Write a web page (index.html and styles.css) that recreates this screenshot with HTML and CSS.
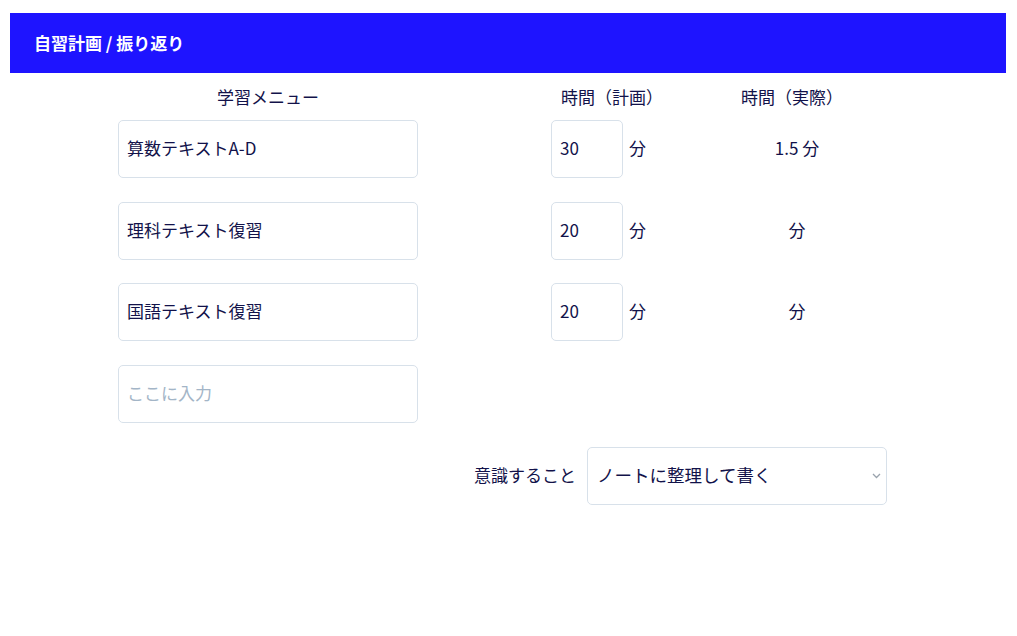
FILE: index.html
```html
<!DOCTYPE html>
<html lang="ja">
<head>
<meta charset="utf-8">
<title>自習計画 / 振り返り</title>
<link rel="stylesheet" href="styles.css">
</head>
<body>
<header class="bar"><h1 class="title">自習計画 / 振り返り</h1></header>
<main class="sheet">
  <div class="row head">
    <div class="menu">学習メニュー</div>
    <div class="plan">時間（計画）</div>
    <div class="actual">時間（実際）</div>
  </div>
  <div class="row">
    <div class="menu"><input class="field" type="text" value="算数テキストA-D"></div>
    <div class="plan"><input class="field num" type="text" value="30"><span class="unit">分</span></div>
    <div class="actual">1.5 分</div>
  </div>
  <div class="row">
    <div class="menu"><input class="field" type="text" value="理科テキスト復習"></div>
    <div class="plan"><input class="field num" type="text" value="20"><span class="unit">分</span></div>
    <div class="actual">分</div>
  </div>
  <div class="row">
    <div class="menu"><input class="field" type="text" value="国語テキスト復習"></div>
    <div class="plan"><input class="field num" type="text" value="20"><span class="unit">分</span></div>
    <div class="actual">分</div>
  </div>
  <div class="row">
    <div class="menu"><input class="field" type="text" placeholder="ここに入力"></div>
  </div>
  <div class="focus">
    <label class="focus-label">意識すること</label>
    <div class="select">
      <span class="select-value">ノートに整理して書く</span>
      <svg class="chev" width="9" height="6" viewBox="0 0 9 6"><path d="M1 1l3.5 3.5L8 1" fill="none" stroke="#9aa3ad" stroke-width="1.3"/></svg>
    </div>
  </div>
</main>
</body>
</html>
```

FILE: styles.css
```css
* { box-sizing: border-box; }
body {
  margin: 13px 11px 0 10px;
  font-family: "Noto Sans CJK JP", "Noto Sans", sans-serif;
  color: #12124a;
  font-size: 17px;
  background: #fff;
}
.bar {
  height: 60px;
  background: #1e14ff;
  display: flex;
  align-items: center;
  padding-left: 24px;
}
.title {
  margin: 0;
  color: #fff;
  font-size: 17px;
  font-weight: 700;
  line-height: 1;
  padding-bottom: 2px;
}
.sheet {
  padding-left: 108px;
  padding-top: 12px;
  display: flex;
  flex-direction: column;
  gap: 23.67px;
}
.row {
  display: flex;
  align-items: center;
}
.row.head { height: 24px; margin-bottom: -12.67px; }
.menu { width: 300px; text-align: center; }
.head .menu, .head .plan, .head .actual { padding-bottom: 2px; }
.plan {
  width: 120px;
  margin-left: 133px;
  display: flex;
  align-items: center;
  justify-content: flex-start;
}
.head .plan { justify-content: center; padding-left: 2px; }
.actual {
  width: 120px;
  margin-left: 61px;
  text-align: center;
}
.row:not(.head) .actual { padding-left: 10px; padding-bottom: 3px; }
.row:not(.head) .unit { padding-bottom: 3px; }
.field {
  display: block;
  width: 300px;
  height: 58px;
  border: 1px solid #d8e1ea;
  border-radius: 5px;
  padding: 0 8px 3px;
  font: inherit;
  color: inherit;
  background: #fff;
  outline: none;
}
.field::placeholder { color: #a3b5c7; }
.field.num { width: 72px; }
.unit { margin-left: 6px; }
.focus {
  display: flex;
  align-items: center;
  margin-left: 356px;
  gap: 11px;
}
.focus-label { white-space: nowrap; padding-bottom: 3px; }
.select {
  width: 300px;
  height: 58px;
  border: 1px solid #d8e1ea;
  border-radius: 5px;
  display: flex;
  align-items: center;
  justify-content: space-between;
  padding: 0 5px 3px 9px;
  font-size: 17.5px;
}
.chev { display: block; margin-top: 3px; }
```
